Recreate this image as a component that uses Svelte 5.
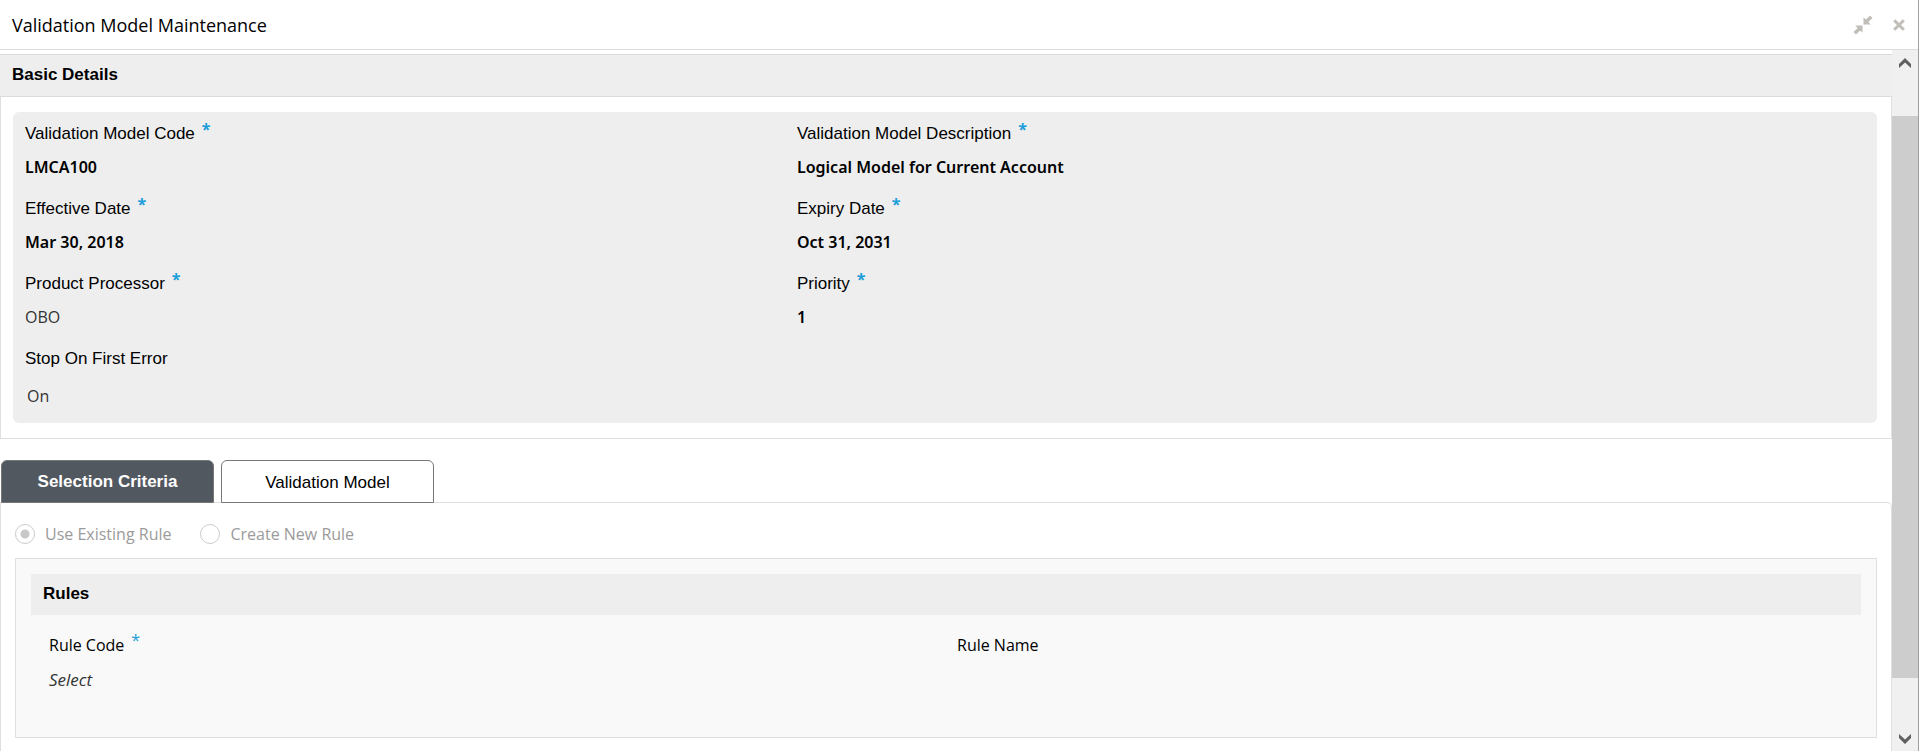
<script>
  let activeTab = $state('criteria');
  let ruleMode = $state('existing');

  const details = [
    { label: 'Validation Model Code', value: 'LMCA100', required: true, strong: true },
    { label: 'Validation Model Description', value: 'Logical Model for Current Account', required: true, strong: true },
    { label: 'Effective Date', value: 'Mar 30, 2018', required: true, strong: true },
    { label: 'Expiry Date', value: 'Oct 31, 2031', required: true, strong: true },
    { label: 'Product Processor', value: 'OBO', required: true },
    { label: 'Priority', value: '1', required: true, strong: true },
    { label: 'Stop On First Error', value: 'On', toggle: true },
  ];

  const tabs = [
    { id: 'criteria', label: 'Selection Criteria' },
    { id: 'model', label: 'Validation Model' },
  ];

  // share of the track above, under and below the thumb
  const scroll = { before: 41, thumb: 561, after: 48 };
</script>

<div class="window">
  <header class="titlebar">
    <h1>Validation Model Maintenance</h1>
    <div class="window-actions">
      <button type="button" aria-label="Collapse">
        <svg width="20" height="20" viewBox="0 0 20 20">
          <path d="M10.5 9.5V2.2l2.4 2.4L17 .5 19.5 3l-4.1 4.1 2.4 2.4z" />
          <path d="M9.5 10.5v7.3l-2.4-2.4L3 19.5.5 17l4.1-4.1-2.4-2.4z" />
        </svg>
      </button>
      <button type="button" aria-label="Close">
        <svg width="12" height="12" viewBox="0 0 12 12">
          <path class="cross" d="M1.2 1.2l9.6 9.6M10.8 1.2l-9.6 9.6" />
        </svg>
      </button>
    </div>
  </header>

  <div class="body">
    <main>
      <section class="basic">
        <h2>Basic Details</h2>
        <div class="basic-body">
          <dl class="panel">
            {#each details as item}
              <div class="field">
                <dt>{item.label}{#if item.required}<span class="required">*</span>{/if}</dt>
                <dd class:strong={item.strong} class:toggle={item.toggle}>{item.value}</dd>
              </div>
            {/each}
          </dl>
        </div>
      </section>

      <div class="tabs" role="tablist">
        {#each tabs as tab}
          <button
            type="button"
            role="tab"
            aria-selected={activeTab == tab.id}
            class:active={activeTab == tab.id}
            onclick={() => (activeTab = tab.id)}>{tab.label}</button>
        {/each}
      </div>

      <section class="tab-body">
        <div class="modes">
          <label><input type="radio" value="existing" bind:group={ruleMode} disabled />Use Existing Rule</label>
          <label><input type="radio" value="new" bind:group={ruleMode} disabled />Create New Rule</label>
        </div>
        <div class="rules">
          <h3>Rules</h3>
          <div class="rule-fields">
            <div class="rule">
              <label for="rule-code">Rule Code<span class="required">*</span></label>
              <select id="rule-code" disabled>
                <option>Select</option>
              </select>
            </div>
            <div class="rule">
              <span>Rule Name</span>
            </div>
          </div>
        </div>
      </section>
    </main>

    <div class="scrollbar">
      <button type="button" aria-label="Scroll up">
        <svg width="14" height="12" viewBox="0 0 14 12"><path d="M7 1l6 6v4L7 5.4 1 11V7z" /></svg>
      </button>
      <div style="flex-grow: {scroll.before}"></div>
      <div class="thumb" style="flex-grow: {scroll.thumb}"></div>
      <div style="flex-grow: {scroll.after}"></div>
      <button type="button" aria-label="Scroll down">
        <svg width="14" height="12" viewBox="0 0 14 12"><path d="M7 11l6-6V1L7 6.6 1 1v4z" /></svg>
      </button>
    </div>
  </div>
</div>

<style>
  :global(body) {
    background: #fff;
    color: #000;
  }
  .window {
    display: flex;
    flex-direction: column;
    height: 100vh;
    box-sizing: border-box;
    border-right: 1px solid #a0a0a0;
    overflow: hidden;
    font: 16px/24px "Open Sans", "Noto Sans", sans-serif;
  }
  h1, h2, h3, dl, dd {
    margin: 0;
  }
  button {
    font-family: inherit;
    padding: 0;
    border: 0;
    background: none;
    cursor: pointer;
  }
  svg {
    display: block;
  }

  .titlebar {
    flex: none;
    display: flex;
    align-items: center;
    justify-content: space-between;
    height: 49px;
    padding: 0 13px 0 12px;
    border-bottom: 1px solid #dcdcdc;
  }
  h1 {
    font-size: 18px;
    font-weight: 400;
  }
  .window-actions {
    display: flex;
    align-items: center;
    gap: 20px;
  }
  .window-actions svg {
    fill: #c1beb8;
  }
  .window-actions .cross {
    stroke: #c1beb8;
    stroke-width: 3;
  }

  .body {
    flex: 1;
    display: flex;
    min-height: 0;
  }
  main {
    flex: 1;
    min-width: 0;
    display: flex;
    flex-direction: column;
    padding-top: 4px;
  }

  .basic {
    flex: none;
    border-bottom: 1px solid #dfdfdf;
  }
  h2, h3 {
    padding: 0 12px 2px;
    font: bold 17px/39px "Liberation Sans", Arial, sans-serif;
    background: #eee;
  }
  h2 {
    border: solid #dcdcdc;
    border-width: 1px 0;
  }
  .basic-body {
    padding: 15px 14px 15px 12px;
    border: solid #dfdfdf;
    border-width: 0 1px;
  }
  .panel {
    display: grid;
    grid-template-columns: 42% 58%;
    row-gap: 18px;
    padding: 10px 14px 15px 12px;
    border-radius: 6px;
    background: #eee;
  }
  dt, .rule label {
    display: flex;
    height: 24px;
  }
  dt {
    font: 17px/24px "Liberation Sans", Arial, sans-serif;
  }
  dd {
    margin-top: 9px;
    color: #333;
  }
  dd.strong {
    font-family: "Noto Sans", "Open Sans", sans-serif;
    font-weight: 600;
    color: #000;
  }
  dd.toggle {
    margin-top: 13px;
    padding-left: 2px;
  }
  .required {
    margin-left: 7px;
    font: 700 16px/14px "Open Sans", sans-serif;
    color: #1b9dd9;
  }

  .tabs {
    flex: none;
    display: flex;
    gap: 7px;
    margin-top: 21px;
    padding-left: 1px;
    /* keeps the tab borders above the line of the tab body */
    position: relative;
    z-index: 1;
  }
  .tabs button {
    width: 213px;
    height: 43px;
    padding-top: 3px;
    border: 1px solid #777;
    border-radius: 6px 6px 0 0;
    background: #fff;
    font: 17px/24px "Liberation Sans", Arial, sans-serif;
    color: #000;
  }
  .tabs button.active {
    padding-top: 0;
    background: #52585f;
    color: #fff;
    font-weight: bold;
  }
  .tab-body {
    flex: 1;
    margin-top: -1px;
    padding: 19px 14px 0;
    border: solid #dfdfdf;
    border-width: 1px 1px 0;
    border-top-right-radius: 5px;
  }
  .modes {
    display: flex;
    gap: 29px;
    color: #9b9b9b;
  }
  .modes label {
    display: flex;
    align-items: center;
    gap: 10px;
  }
  .modes input {
    appearance: none;
    box-sizing: border-box;
    width: 20px;
    height: 20px;
    margin: 0;
    border: 1px solid #ccc;
    border-radius: 50%;
    background: #fff;
  }
  .modes input:checked {
    background: radial-gradient(circle, #c8c8c8 4px, #fff 5px);
  }

  .rules {
    margin-top: 12px;
    padding: 15px 15px 45px;
    border: 1px solid #dfdfdf;
    background: #f9f9f9;
  }
  .rule-fields {
    display: grid;
    grid-template-columns: 1fr 1fr;
    column-gap: 4px;
    padding: 18px 0 0 18px;
  }
  .rule {
    display: flex;
    flex-direction: column;
    align-items: flex-start;
    gap: 11px;
  }
  .rule .required {
    font-weight: 400;
  }
  select {
    appearance: none;
    height: 24px;
    padding: 0;
    border: 0;
    background: none;
    font: italic 17px/24px "Open Sans", "Noto Sans", sans-serif;
    color: #333;
    opacity: 1;
  }

  .scrollbar {
    flex: none;
    display: flex;
    flex-direction: column;
    width: 26px;
    background: #f0f0f0;
  }
  .scrollbar button {
    flex: none;
    display: flex;
    align-items: center;
    justify-content: center;
    height: 25px;
  }
  .scrollbar svg {
    fill: #606060;
  }
  .thumb {
    background: #cdcdcd;
  }
</style>
